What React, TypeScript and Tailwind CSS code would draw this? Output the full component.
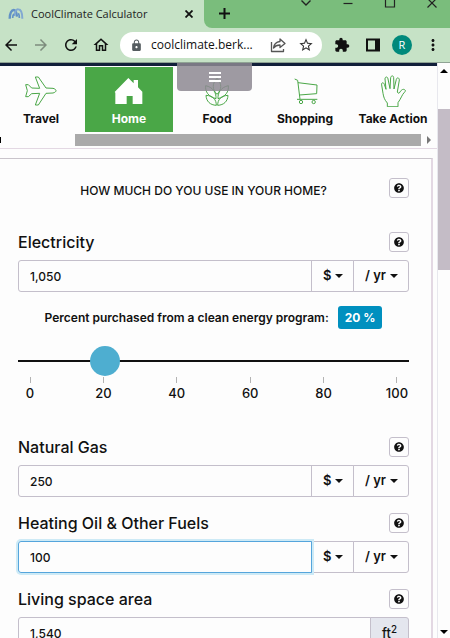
import type { ReactNode } from "react";
import { FaQuestionCircle } from "react-icons/fa";
import {
  MdArrowBack,
  MdArrowForward,
  MdExtension,
  MdLock,
  MdMoreVert,
  MdOutlineHome,
  MdRefresh,
  MdStarBorder,
} from "react-icons/md";

const TravelIcon = () => (
  <svg className="h-[30px] w-8" viewBox="0 0 96 90" fill="none" stroke="currentColor" strokeWidth="3" strokeLinejoin="round">
    <path d="M2 26h8l10 10 24 1L31 3h9l23 33 21 1c12 3 12 11 0 14l-21 1-23 35h-9l13-35-24 1-10 9H2l5-18z" />
  </svg>
);

const HomeIcon = () => (
  <svg className="h-[30px] w-8" viewBox="0 0 96 90" fill="currentColor">
    <path d="M46 6l16 16V12h13v22l13 13v37H59V60H41v24H7V50l-2-2z" />
  </svg>
);

const FoodIcon = () => (
  <svg className="h-[30px] w-8" viewBox="0 0 96 90" fill="none" stroke="currentColor" strokeWidth="3" strokeLinejoin="round">
    <path d="M48 7c-15 16-15 33 0 48 15-15 15-32 0-48z" />
    <path d="M14 29c-2 18 8 33 31 39 1-19-9-34-31-39zM82 29c2 18-8 33-31 39-1-19 9-34 31-39z" />
    <path d="M15 58c1 18 12 29 31 30 0-17-10-29-31-30zM81 58c-1 18-12 29-31 30 0-17 10-29 31-30z" />
  </svg>
);

const ShoppingIcon = () => (
  <svg className="h-[30px] w-8" viewBox="0 0 96 90" fill="none" stroke="currentColor" strokeWidth="3" strokeLinejoin="round">
    <path d="M17 9l9 4 7 57M27 20l57 7-1 26-52 4M24 70h61" />
    <circle cx="36" cy="78" r="5" />
    <circle cx="74" cy="78" r="5" />
  </svg>
);

const ActionIcon = () => (
  <svg className="h-8 w-8" viewBox="0 0 96 96" fill="none" stroke="currentColor" strokeWidth="3" strokeLinejoin="round" strokeLinecap="round">
    <path d="M31 94v-10C22 74 20 66 18 55l-4-25c-2-8 6-9 8-2l5 15-3-31c0-8 8-8 9 0l6 29 2-33c1-7 9-7 9 0l1 34 7-29c2-7 9-5 9 2l-6 36c3 5 5 5 8 0 5-8 10-10 15-6 3 2 1 5-2 7-7 7-10 19-19 31v11z" />
  </svg>
);

const Caret = () => (
  <svg className="pointer-events-none absolute top-[14px] right-[11px] h-1 w-2" viewBox="0 0 8 4" fill="currentColor">
    <path d="M0 0h8L4 4z" />
  </svg>
);

const HelpButton = ({ label }: { label: string }) => (
  <button
    type="button"
    aria-label={label}
    className="flex h-5 w-5 shrink-0 items-center justify-center rounded-[3px] border border-[#c4bfcb]"
  >
    <FaQuestionCircle className="h-[10px] w-[10px]" />
  </button>
);

const NavItem = ({ icon, label, active }: { icon: ReactNode; label: string; active?: boolean }) => (
  <a
    href="#"
    className={
      active
        ? "flex h-[65px] w-[88px] shrink-0 flex-col items-center bg-[#4aa747] pt-2 text-white"
        : "flex h-[65px] w-[88px] shrink-0 flex-col items-center pt-2 text-[#4aa747]"
    }
  >
    <span className="flex h-8 items-center">{icon}</span>
    <span className={active ? "mt-1 text-[12px] leading-4 font-bold whitespace-nowrap" : "mt-1 text-[12px] leading-4 font-bold whitespace-nowrap text-[#111]"}>
      {label}
    </span>
  </a>
);

const UnitSelect = ({ label, options, className }: { label: string; options: string[]; className: string }) => (
  <span className="relative -ml-px shrink-0">
    <select
      aria-label={label}
      className={`h-8 appearance-none border border-[#c4bfcb] bg-[#fdfdfd] pl-[11px] text-[13px] font-semibold ${className}`}
    >
      {options.map((option) => (
        <option key={option}>{option}</option>
      ))}
    </select>
    <Caret />
  </span>
);

const Field = ({ id, label, value, focused, unit }: { id: string; label: string; value: string; focused?: boolean; unit?: ReactNode }) => (
  <div>
    <div className="flex h-5 items-center justify-between">
      <label htmlFor={id} className="text-[16px] leading-5 font-medium">
        {label}
      </label>
      <HelpButton label={`About ${label}`} />
    </div>
    <div className="mt-2 flex">
      <input
        id={id}
        type="text"
        defaultValue={value}
        className={
          focused
            ? "relative z-10 h-8 min-w-0 flex-1 rounded-l-[3px] border border-[#55a5dc] px-[11px] text-[12px] font-medium shadow-[0_0_0_2px_#cdeaf6] outline-none"
            : "h-8 min-w-0 flex-1 rounded-l-[3px] border border-[#c4bfcb] px-[11px] text-[12px] font-medium outline-none"
        }
      />
      {unit ?? (
        <>
          <UnitSelect label={`${label} unit`} options={["$", "kWh"]} className="w-[43px]" />
          <UnitSelect label={`${label} period`} options={["/ yr", "/ mo"]} className="w-14 rounded-r-[3px]" />
        </>
      )}
    </div>
  </div>
);

const BrowserBar = () => (
  <header className="shrink-0 bg-[#c6e2c6] font-['Open_Sans','Noto_Sans',sans-serif] text-[12px] text-[#222]">
    <div className="flex h-7">
      <div className="flex w-[204px] shrink-0 items-center pr-2 pl-2">
        <svg className="h-4 w-4 shrink-0" viewBox="0 0 48 48" fill="none" stroke="#6292c6">
          <path strokeWidth="7" d="M5 38C5 22 11 12 17 12s9 9 10 20" />
          <path strokeWidth="6" stroke="#82a9d2" d="M19 30c2-16 7-21 12-20 8 1 12 12 12 28" />
          <path strokeWidth="5" d="M14 36c0-6 1-10 4-12M31 22c3 4 3 8 3 14" />
        </svg>
        <span className="ml-[7px] flex-1 text-[11px] whitespace-nowrap">CoolClimate Calculator</span>
        <button type="button" aria-label="Close tab" className="p-[3px]">
          <svg className="h-2 w-2" viewBox="0 0 8 8" stroke="#111" strokeWidth="1.8">
            <path d="M0.5 0.5l7 7M7.5 0.5l-7 7" />
          </svg>
        </button>
      </div>
      <div className="flex flex-1 items-start justify-between rounded-bl-lg bg-[#7abd7c] pr-3 pl-[15px]">
        <button type="button" aria-label="New tab" className="flex h-[26px] items-center">
          <svg className="h-[11px] w-[11px]" viewBox="0 0 11 11" stroke="#111" strokeWidth="2">
            <path d="M5.5 0v11M0 5.5h11" />
          </svg>
        </button>
        <div className="flex gap-[30px] text-[#222]">
          <button type="button" aria-label="Search tabs">
            <svg className="block h-2 w-3" viewBox="0 0 12 8" fill="none" stroke="currentColor" strokeWidth="1.4">
              <path d="M1.5 0.5L6 5l4.500-4.500" />
            </svg>
          </button>
          <button type="button" aria-label="Minimize">
            <svg className="block h-2 w-3" viewBox="0 0 12 8" stroke="currentColor" strokeWidth="1.2">
              <path d="M1.5 3.5h9" />
            </svg>
          </button>
          <button type="button" aria-label="Maximize">
            <svg className="block h-2 w-3" viewBox="0 0 12 8" fill="none" stroke="currentColor" strokeWidth="1.2">
              <path d="M1.5-2v9h9v-9" />
            </svg>
          </button>
          <button type="button" aria-label="Close">
            <svg className="block h-2 w-3" viewBox="0 0 12 8" stroke="currentColor" strokeWidth="1.2">
              <path d="M1.5 7.5L10-1M10.5 7.5L2-1" />
            </svg>
          </button>
        </div>
      </div>
    </div>
    <div className="flex h-[34px] items-center pr-2 pl-0.5 text-[#111]">
      <div className="flex items-center gap-3">
        <button type="button" aria-label="Back"><MdArrowBack className="h-[18px] w-[18px]" /></button>
        <button type="button" aria-label="Forward" className="text-[#7d8c7d]"><MdArrowForward className="h-[18px] w-[18px]" /></button>
        <button type="button" aria-label="Reload"><MdRefresh className="h-[18px] w-[18px]" /></button>
        <button type="button" aria-label="Home page"><MdOutlineHome className="h-[18px] w-[18px]" /></button>
      </div>
      <div className="ml-[10px] flex h-[26px] min-w-0 flex-1 items-center rounded-full bg-white pr-2 pl-[10px]">
        <MdLock className="h-[13px] w-[13px] shrink-0 text-[#555c60]" />
        <input
          aria-label="Address"
          defaultValue="coolclimate.berk..."
          className="ml-2 min-w-0 flex-1 text-[12px] outline-none"
        />
        <button type="button" aria-label="Share" className="mr-3">
          <svg className="h-4 w-4" viewBox="0 0 16 16" fill="none" stroke="#555" strokeWidth="1.3" strokeLinejoin="round">
            <path d="M1.5 5v9.500h12V12" />
            <path d="M10 2l5 4.500-5 4V8c-3 0-5 1-6.500 3C4 7 6 5 10 4.500z" />
          </svg>
        </button>
        <button type="button" aria-label="Bookmark"><MdStarBorder className="h-4 w-4 text-[#333]" /></button>
      </div>
      <div className="ml-3 flex items-center">
        <button type="button" aria-label="Extensions"><MdExtension className="h-4 w-4" /></button>
        <button type="button" aria-label="Side panel" className="ml-4">
          <svg className="h-[14px] w-[14px]" viewBox="0 0 14 14" fill="none" stroke="currentColor" strokeWidth="2">
            <path d="M1 1.5h12v11H1z" />
            <path strokeWidth="4" d="M11 2v10" />
          </svg>
        </button>
        <button type="button" className="ml-3 h-5 w-5 rounded-full bg-[#00897b] text-[11px] leading-5 text-white">R</button>
        <button type="button" aria-label="Menu" className="ml-3"><MdMoreVert className="h-[18px] w-[18px]" /></button>
      </div>
    </div>
  </header>
);

const navItems = [
  { label: "Travel", icon: <TravelIcon /> },
  { label: "Home", icon: <HomeIcon />, active: true },
  { label: "Food", icon: <FoodIcon /> },
  { label: "Shopping", icon: <ShoppingIcon /> },
  { label: "Take Action", icon: <ActionIcon /> },
];

const ticks = [0, 20, 40, 60, 80, 100];

export default function App() {
  return (
    <div className="flex h-screen flex-col overflow-hidden bg-[#fdfdfd] font-['Inter','Liberation_Sans',sans-serif] text-[#111]">
      <BrowserBar />
      <div className="flex min-h-0 flex-1 border-t border-[#8fa394]">
        <main className="relative min-w-0 flex-1 overflow-hidden">
          <div className="h-[3px] bg-[#12203a]" />
          <nav className="border-b border-[#e3d8e3] pt-px">
            <div className="flex justify-end overflow-hidden">
              {navItems.map((item) => (
                <NavItem key={item.label} {...item} />
              ))}
            </div>
            <div className="mt-0.5 mb-0.5 flex h-3 items-center justify-between">
              <div className="h-[6px] w-px bg-black" />
              <div className="ml-[74px] h-3 flex-1 bg-[#aaa]" />
              <svg className="mx-[6px] h-2 w-1" viewBox="0 0 4 8" fill="#777">
                <path d="M0 0l4 4-4 4z" />
              </svg>
            </div>
          </nav>
          <button
            type="button"
            aria-label="Toggle menu"
            className="absolute top-0 left-[177px] flex h-7 w-[75px] items-center justify-center rounded-b bg-[#8d8892]/85"
          >
            <svg className="h-[10px] w-3" viewBox="0 0 12 10" stroke="#fff" strokeWidth="2">
              <path d="M0 1h12M0 5h12M0 9h12" />
            </svg>
          </button>

          <section className="mt-[9px] mr-1 border-t border-r-2 border-t-[#c9c4cb] border-r-[#e3d8e3] pt-[19px] pr-[22px] pl-[18px]">
            <div className="flex items-start">
              <h1 className="flex-1 pt-[3px] text-center text-[12px] leading-5 font-medium whitespace-nowrap">
                HOW MUCH DO YOU USE IN YOUR HOME?
              </h1>
              <HelpButton label="About home usage" />
            </div>

            <div className="mt-[31px]">
              <Field id="electricity" label="Electricity" value="1,050" />
            </div>

            <div className="mt-[14px] flex items-center justify-center gap-[9px] text-[12px] leading-[23px] font-semibold">
              <label htmlFor="clean" className="whitespace-nowrap">
                Percent purchased from a clean energy program:
              </label>
              <output htmlFor="clean" className="shrink-0 rounded-[3px] bg-[#0090bf] px-[7px] font-bold text-white">
                20 %
              </output>
            </div>
            <input
              id="clean"
              type="range"
              defaultValue={20}
              className="mt-[17px] block h-[30px] w-full appearance-none bg-transparent [&::-webkit-slider-runnable-track]:h-0.5 [&::-webkit-slider-runnable-track]:bg-[#111] [&::-webkit-slider-thumb]:-mt-[14px] [&::-webkit-slider-thumb]:h-[30px] [&::-webkit-slider-thumb]:w-[30px] [&::-webkit-slider-thumb]:appearance-none [&::-webkit-slider-thumb]:rounded-full [&::-webkit-slider-thumb]:bg-[#4eaed0]"
            />
            <div className="mt-px flex justify-between text-[13px] leading-4 font-medium">
              {ticks.map((tick) => (
                <div key={tick} className="flex w-6 flex-col items-center">
                  <span className="mb-0.5 h-[6px] w-px bg-[#b3b3b3]" />
                  {tick}
                </div>
              ))}
            </div>

            <div className="mt-9 flex flex-col gap-4">
              <Field id="gas" label="Natural Gas" value="250" />
              <Field id="oil" label="Heating Oil & Other Fuels" value="100" focused />
              <Field
                id="area"
                label="Living space area"
                value="1,540"
                unit={
                  <span className="-ml-px flex h-8 w-[39px] items-center justify-center rounded-r-[3px] border border-[#c4bfcb] bg-[#e4e6ee] text-[13px] leading-none font-medium">
                    <span>
                      ft<sup>2</sup>
                    </span>
                  </span>
                }
              />
            </div>
          </section>
        </main>

        <aside className="flex w-[13px] shrink-0 flex-col items-center justify-between border-l border-[#e8e8ee] pt-[6px] pb-1">
          <svg className="h-1 w-2" viewBox="0 0 8 4"><path d="M0 4h8L4 0z" /></svg>
          <div className="mt-9 h-[161px] w-full bg-[#c4bcc6]" />
          <div className="flex-1" />
          <svg className="h-1 w-2" viewBox="0 0 8 4"><path d="M0 0h8L4 4z" /></svg>
        </aside>
      </div>
    </div>
  );
}
